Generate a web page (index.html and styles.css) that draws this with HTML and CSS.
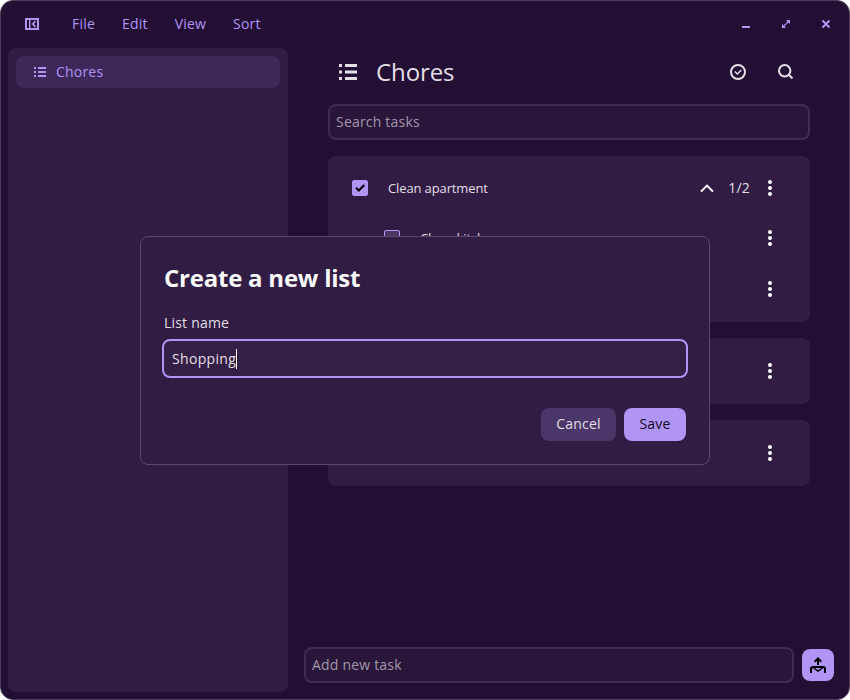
FILE: index.html
```html
<!DOCTYPE html>
<html lang="en">
<head>
<meta charset="utf-8">
<title>Tasks</title>
<link rel="stylesheet" href="styles.css">
</head>
<body>
<svg class="defs" aria-hidden="true">
  <symbol id="dots" viewBox="0 0 16 16"><circle cx="8" cy="2" r="2"/><circle cx="8" cy="8" r="2"/><circle cx="8" cy="14" r="2"/></symbol>
  <symbol id="list" viewBox="0 0 12 10"><path d="M0 0h2v2H0zM4 0h8v2H4zM0 4h2v2H0zM4 4h8v2H4zM0 8h2v2H0zM4 8h8v2H4z"/></symbol>
</svg>
<div class="window">
  <header class="titlebar">
    <svg class="panel-icon" width="14" height="12" viewBox="0 0 14 12"><path fill-rule="evenodd" d="M0 0h14v12H0zM2 2v8h2V2zM5.5 2v8H12V2z"/><path class="line" d="M10.5 3L7.8 6l2.7 3"/></svg>
    <nav class="menu"><span>File</span><span>Edit</span><span>View</span><span>Sort</span></nav>
    <div class="controls">
      <svg width="16" height="16" viewBox="0 0 16 16"><path d="M4 10h8v2H4z"/></svg>
      <svg width="16" height="16" viewBox="0 0 16 16"><path d="M8 4h4v4l-1.5-1.5-1.8 1.8-1-1 1.8-1.8zM8 12H4V8l1.5 1.5 1.8-1.8 1 1-1.8 1.8z"/></svg>
      <svg width="16" height="16" viewBox="0 0 16 16"><path class="line" d="M4.5 4.5l7 7M11.5 4.5l-7 7"/></svg>
    </div>
  </header>
  <div class="body">
    <aside class="sidebar">
      <div class="nav-item"><svg width="12" height="10"><use href="#list"/></svg><span>Chores</span></div>
    </aside>
    <main class="main">
      <div class="content">
        <div class="heading">
          <svg class="heading-icon" width="18" height="16" viewBox="0 0 18 16"><path d="M0 0h3v3H0zM6 0h12v3H6zM0 6.5h3v3H0zM6 6.5h12v3H6zM0 13h3v3H0zM6 13h12v3H6z"/></svg>
          <h1>Chores</h1>
          <svg class="done-icon" width="16" height="16" viewBox="0 0 16 16"><circle class="line" cx="8" cy="8" r="7"/><path class="line thin" d="M4.8 7.5l2.5 2.5L11.3 6"/></svg>
          <svg width="16" height="16" viewBox="0 0 16 16"><circle class="line" cx="6.7" cy="6.7" r="5.7"/><path class="line" d="M10.7 10.7l3.8 3.8"/></svg>
        </div>
        <div class="field search">Search tasks</div>
        <section class="card">
          <div class="task">
            <span class="check checked"><svg width="16" height="16" viewBox="0 0 16 16"><path class="line" d="M4 7.8l2.8 2.7L12.3 5"/></svg></span>
            <span class="label">Clean apartment</span>
            <svg class="chevron" width="14" height="9" viewBox="0 0 14 9"><path class="line" d="M1 7.6l6-6 6 6"/></svg>
            <span class="count">1/2</span>
            <svg class="more" width="16" height="16"><use href="#dots"/></svg>
          </div>
          <div class="task sub"><span class="check"></span><span class="label">Clean kitchen</span><svg class="more" width="16" height="16"><use href="#dots"/></svg></div>
          <div class="task sub"><span class="check"></span><span class="label"></span><svg class="more" width="16" height="16"><use href="#dots"/></svg></div>
        </section>
        <section class="card"><div class="task"><span class="check"></span><span class="label"></span><svg class="more" width="16" height="16"><use href="#dots"/></svg></div></section>
        <section class="card"><div class="task"><span class="check"></span><span class="label"></span><svg class="more" width="16" height="16"><use href="#dots"/></svg></div></section>
      </div>
      <div class="add-row">
        <div class="field add">Add new task</div>
        <div class="send"><svg width="16" height="16" viewBox="0 0 16 16"><path class="line" d="M8 8V1.5M4.7 4.7L8 1.4l3.3 3.3M1 16v-4Q1 10 3 10h10q2 0 2 2v4"/><path class="line thin" d="M3.6 11L8 14l4.4-3"/></svg></div>
      </div>
    </main>
  </div>
  <div class="dialog">
    <h2>Create a new list</h2>
    <div class="field-label">List name</div>
    <div class="name-input"><span>Shopping</span><i class="caret"></i></div>
    <div class="actions"><div class="btn">Cancel</div><div class="btn primary">Save</div></div>
  </div>
</div>
</body>
</html>
```
FILE: styles.css
```css
* { box-sizing: border-box; }
body { margin: 0; background: #fff; font: 14px/20px "Open Sans", "Noto Sans", sans-serif; letter-spacing: 0.2px; color: #e3dfe6; }
svg { display: block; flex: none; fill: currentColor; }
.defs { position: absolute; width: 0; height: 0; }
.line { fill: none; stroke: currentColor; stroke-width: 2; }
.thin { stroke-width: 1.5; }
h1, h2 { margin: 0; letter-spacing: -0.1px; }
.window { position: relative; width: 850px; height: 700px; padding: 0 7px 7px; display: flex; flex-direction: column; background: #230f34; border: 1px solid #4d3d5a; border-radius: 13px; overflow: hidden; }
.titlebar { height: 47px; flex: none; display: flex; align-items: center; padding: 0 8px 1px 17px; color: #b095f5; }
.menu { display: flex; gap: 27px; margin-left: 33px; }
.controls { display: flex; gap: 24px; margin-left: auto; }
.panel-icon .line { stroke-width: 1.7; }
.body { flex: 1; display: flex; min-height: 0; }
.sidebar { width: 280px; padding: 8px; background: #311d44; border-radius: 8px; }
.nav-item { height: 32px; display: flex; align-items: center; gap: 10px; padding-left: 18px; background: #3c2859; border-radius: 8px; color: #b095f5; }
.main { flex: 1; display: flex; flex-direction: column; padding: 0 8px 9px 16px; }
.content { flex: 1; padding: 0 24px; }
.heading { height: 48px; display: flex; align-items: center; padding: 0 16px 0 11px; }
h1 { flex: 1; margin-left: 19px; font-size: 24px; font-weight: 400; line-height: 32px; }
.done-icon { margin-right: 32px; }
.field { height: 36px; display: flex; align-items: center; padding: 0 6px 1px; border: 2px solid #3f2c4f; border-radius: 8px; background: #2a153b; color: #a198a9; }
.search { margin: 8px 0 15.5px; }
.card { background: #311d44; border-radius: 8px; padding: 8px 24px; margin-bottom: 15.6px; }
.task { height: 50.3px; display: flex; align-items: center; padding: 0 8px 1px 0; }
.sub { padding-left: 32px; }
.check { width: 16px; height: 16px; border: 1px solid #b095f5; border-radius: 2px; background: #4a3765; color: #000; }
.checked { background: #b095f5; }
.checked svg { margin: -1px; }
.label { flex: 1; margin-left: 20px; font-size: 13px; letter-spacing: -0.12px; }
.count { margin: 0 12px 0 14px; }
.chevron, .more { color: #fff; }
.sub:last-child .more, .task:only-child .more { margin-top: 1px; }
.add-row { display: flex; align-items: center; gap: 8px; }
.add { flex: 1; }
.send { width: 32px; height: 32px; display: grid; place-items: center; background: #b095f5; border-radius: 8px; color: #000; }
.dialog { position: absolute; left: 139px; top: 235px; width: 570px; height: 229px; padding: 23px 21px; background: #311d44; border: 1px solid #5b4968; border-radius: 8px; }
h2 { margin-left: 2px; font-size: 24px; line-height: 36px; letter-spacing: -0.23px; color: #fafafa; }
.field-label { margin: 17px 2px 6px; line-height: 20px; }
.name-input { height: 39px; display: flex; align-items: center; padding: 0 8px; border: 2px solid #b095f5; border-radius: 8px; background: #341f46; letter-spacing: 0.32px; }
.caret { width: 1px; height: 20px; background: #fff; }
.actions { display: flex; justify-content: flex-end; gap: 8px; margin: 30px 2px 0; }
.btn { height: 33px; padding: 6px 15.4px 7px; border-radius: 8px; background: #4a3668; }
.primary { background: #b095f5; color: #110819; }
```
